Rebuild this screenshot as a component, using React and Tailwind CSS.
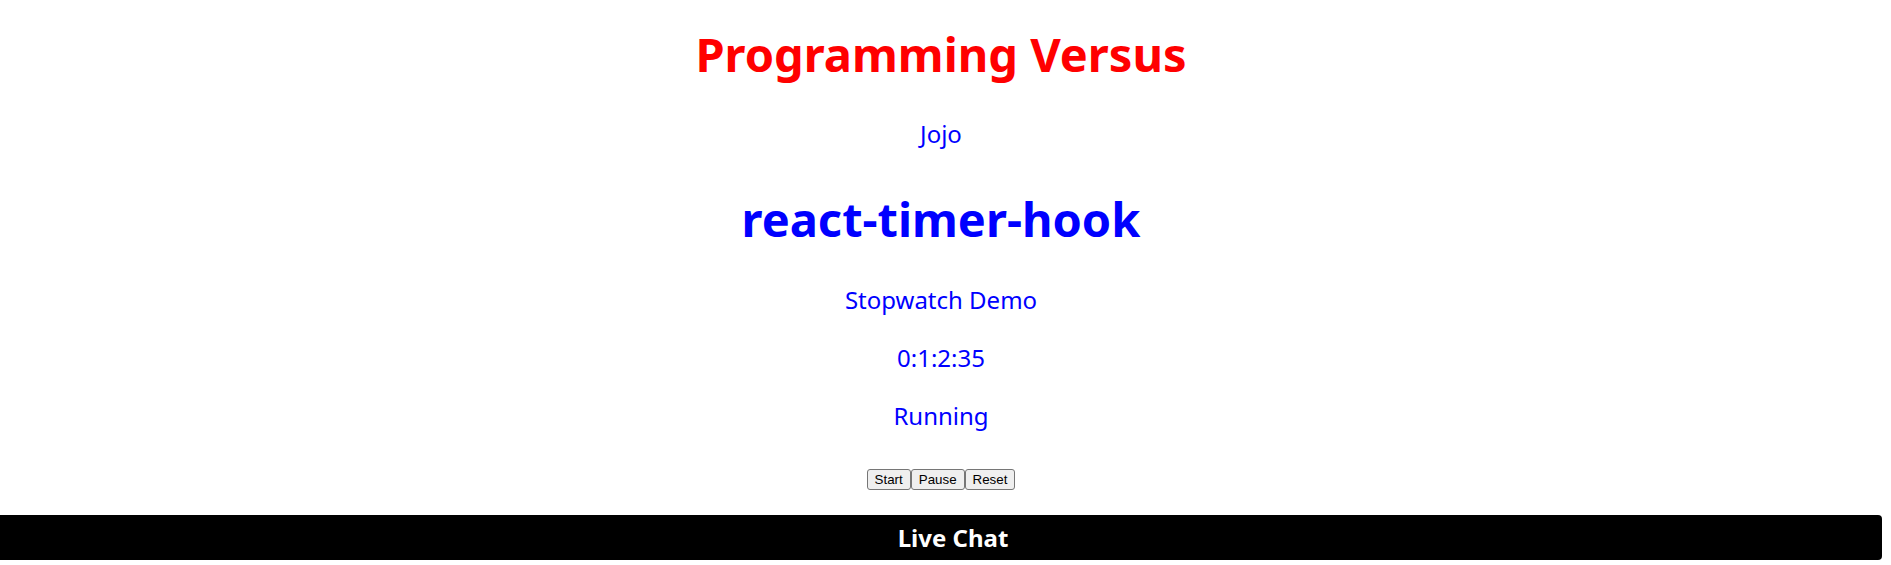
import React from 'react';

const font = { fontFamily: '"Segoe UI", "Noto Sans", sans-serif' };

function Stopwatch() {
  return (
    <div className="flex flex-col items-center text-[#0000ff]">
      <h2 className="mt-[43px] text-[47px] font-bold leading-[50px]">react-timer-hook</h2>
      <p className="mt-[39px] text-[24px] leading-[34px]">Stopwatch Demo</p>
      <p className="mt-[24px] text-[24px] leading-[34px]">0:1:2:35</p>
      <p className="mt-[24px] text-[24px] leading-[34px]">Running</p>
      <div className="mt-[36px] flex text-black" style={{ fontFamily: '"Liberation Sans", Arial, sans-serif' }}>
        <button className="rounded-[3px] border border-[#767676] bg-[#efefef] px-[7px] py-[2px] text-[13.33px] leading-[15px]">Start</button>
        <button className="rounded-[3px] border border-[#767676] bg-[#efefef] px-[7px] py-[2px] text-[13.33px] leading-[15px]">Pause</button>
        <button className="rounded-[3px] border border-[#767676] bg-[#efefef] px-[7px] py-[2px] text-[13.33px] leading-[15px]">Reset</button>
      </div>
    </div>
  );
}

export default function App() {
  return (
    <div className="min-h-[565px] w-[1882px] bg-white" style={font}>
      <div className="flex flex-col items-center">
        <h1 className="mt-[22px] text-[47px] font-bold leading-[64px] text-[#ff0000]">Programming Versus</h1>
        <p className="mt-[31px] text-[24px] leading-[34px] text-[#0000ff]">Jojo</p>
      </div>
      <Stopwatch />
      {/* live chat bar */}
      <div className="mt-[25px] flex h-[45px] items-center justify-center rounded-r-[4px] bg-black pl-[24px] text-[24px] font-bold text-white">
        Live Chat
      </div>
    </div>
  );
}
